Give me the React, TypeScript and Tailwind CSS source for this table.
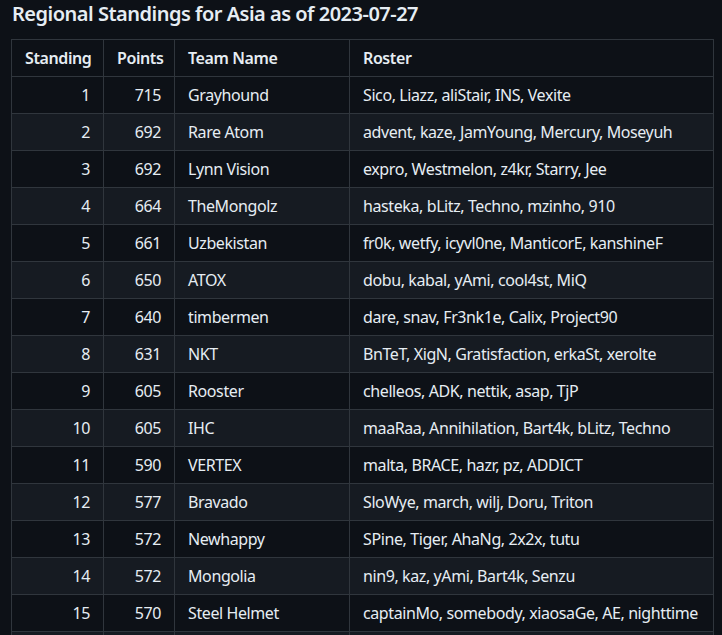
const rows: [number, number, string, string][] = [
  [1, 715, "Grayhound", "Sico, Liazz, aliStair, INS, Vexite"],
  [2, 692, "Rare Atom", "advent, kaze, JamYoung, Mercury, Moseyuh"],
  [3, 692, "Lynn Vision", "expro, Westmelon, z4kr, Starry, Jee"],
  [4, 664, "TheMongolz", "hasteka, bLitz, Techno, mzinho, 910"],
  [5, 661, "Uzbekistan", "fr0k, wetfy, icyvl0ne, ManticorE, kanshineF"],
  [6, 650, "ATOX", "dobu, kabal, yAmi, cool4st, MiQ"],
  [7, 640, "timbermen", "dare, snav, Fr3nk1e, Calix, Project90"],
  [8, 631, "NKT", "BnTeT, XigN, Gratisfaction, erkaSt, xerolte"],
  [9, 605, "Rooster", "chelleos, ADK, nettik, asap, TjP"],
  [10, 605, "IHC", "maaRaa, Annihilation, Bart4k, bLitz, Techno"],
  [11, 590, "VERTEX", "malta, BRACE, hazr, pz, ADDICT"],
  [12, 577, "Bravado", "SloWye, march, wilj, Doru, Triton"],
  [13, 572, "Newhappy", "SPine, Tiger, AhaNg, 2x2x, tutu"],
  [14, 572, "Mongolia", "nin9, kaz, yAmi, Bart4k, Senzu"],
  [15, 570, "Steel Helmet", "captainMo, somebody, xiaosaGe, AE, nighttime"],
];

export default function App() {
  return (
    <div className="h-screen bg-[#0d1117] text-[#e6edf3] font-['Noto_Sans','Open_Sans',sans-serif] pl-[11px] overflow-hidden">
      <h3 className="text-[20px] leading-[25px] font-semibold tracking-[-0.5px] pt-px pb-[13px] pl-px">
        Regional Standings for Asia as of 2023-07-27
      </h3>

      {/* Standings table */}
      <table className="border-collapse text-[16px] leading-6 tracking-[-0.4px] table-fixed w-[702px]">
        <colgroup>
          <col className="w-[92px]" />
          <col className="w-[71px]" />
          <col className="w-[175px]" />
          <col className="w-[364px]" />
        </colgroup>
        <thead>
          <tr>
            <th className="border border-[#30363d] px-[13px] py-[6px] font-semibold text-center">Standing</th>
            <th className="border border-[#30363d] px-[13px] py-[6px] font-semibold text-center">Points</th>
            <th className="border border-[#30363d] px-[13px] py-[6px] font-semibold text-left">Team Name</th>
            <th className="border border-[#30363d] px-[13px] py-[6px] font-semibold text-left">Roster</th>
          </tr>
        </thead>
        <tbody>
          {rows.map(([pos, pts, team, roster], i) => (
            <tr key={pos} className={i % 2 === 1 ? "bg-[#161b22]" : "bg-[#0d1117]"}>
              <td className="border border-[#30363d] px-[13px] py-[6px] text-right">{pos}</td>
              <td className="border border-[#30363d] px-[13px] py-[6px] text-right">{pts}</td>
              <td className="border border-[#30363d] px-[13px] py-[6px] whitespace-nowrap">{team}</td>
              <td className="border border-[#30363d] px-[13px] py-[6px] whitespace-nowrap">{roster}</td>
            </tr>
          ))}
          {/* next row, cut off by the window */}
          <tr className="bg-[#161b22]">
            <td className="border border-[#30363d] px-[13px] py-[6px]">&nbsp;</td>
            <td className="border border-[#30363d] px-[13px] py-[6px]">&nbsp;</td>
            <td className="border border-[#30363d] px-[13px] py-[6px]">&nbsp;</td>
            <td className="border border-[#30363d] px-[13px] py-[6px]">&nbsp;</td>
          </tr>
        </tbody>
      </table>
    </div>
  );
}
